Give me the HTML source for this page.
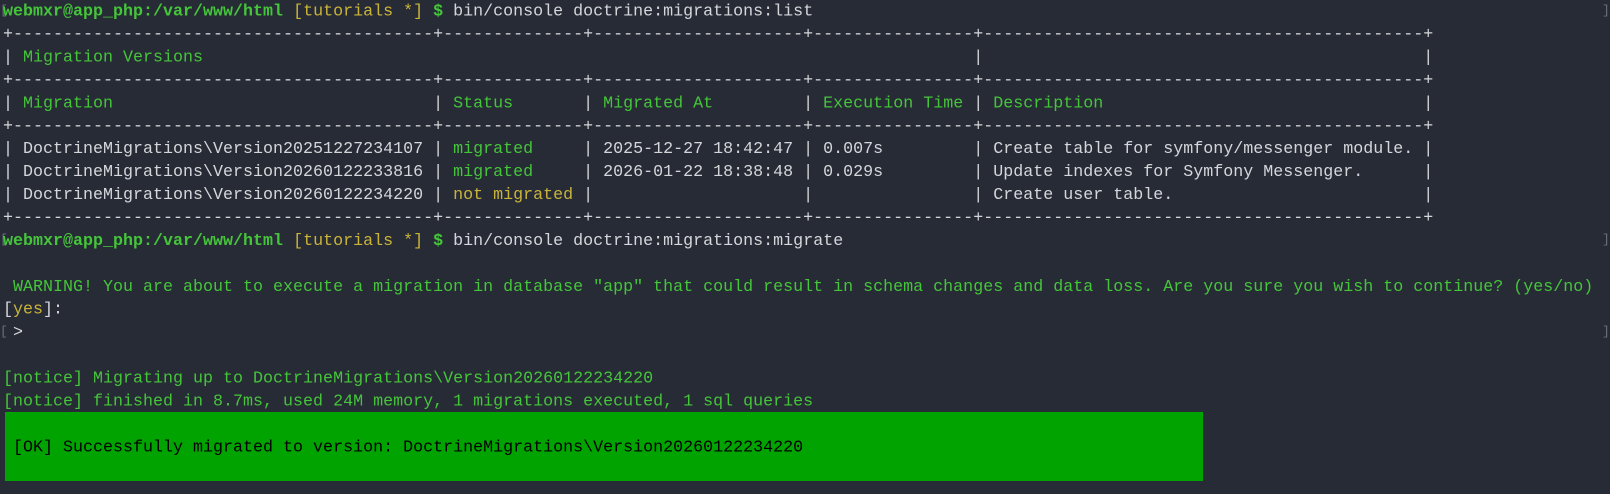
<!DOCTYPE html>
<html><head><meta charset="utf-8"><style>
html,body{margin:0;padding:0;background:#272b36;width:1610px;height:494px;overflow:hidden}
pre{position:absolute;left:3px;top:0px;margin:0;font-family:"Liberation Mono",monospace;font-size:16px;line-height:22px;color:#d4d6da;white-space:pre;transform:scale(1.0417,1.0423);transform-origin:0 0}
.g{color:#45c53a}.gb{color:#45c53a;font-weight:bold}.y{color:#c9b43a}.w{color:#d4d6da}
i{font-style:normal;display:inline-block;vertical-align:top}
.c1{width:40ch}.c2{width:12ch}.c3{width:19ch}.c4{width:14ch}.c5{width:42ch}.ct{width:94ch}.ce{width:44ch}
.box{position:absolute;left:5px;top:412px;width:1198px;height:69px;background:#00a300}
.mk{position:absolute;color:#6a6f7c;font-family:"Liberation Mono",monospace;font-size:13px}
</style></head><body>
<div class="box"></div>
<span class="mk" style="left:0;top:3px">[</span>
<span class="mk" style="left:0;top:232px">[</span>
<span class="mk" style="left:0;top:324px">[</span>
<span class="mk" style="left:1602px;top:3px">]</span>
<span class="mk" style="left:1602px;top:232px">]</span>
<span class="mk" style="left:1602px;top:324px">]</span>
<pre><span class="gb">webmxr@app_php:/var/www/html</span> <span class="y">[tutorials *]</span> <span class="gb">$</span> bin/console doctrine:migrations:list
+------------------------------------------+--------------+---------------------+----------------+--------------------------------------------+
| <i class="ct g">Migration Versions</i> |<i class="ce"></i>|
+------------------------------------------+--------------+---------------------+----------------+--------------------------------------------+
| <i class="c1 g">Migration</i> | <i class="c2 g">Status</i> | <i class="c3 g">Migrated At</i> | <i class="c4 g">Execution Time</i> | <i class="c5 g">Description</i> |
+------------------------------------------+--------------+---------------------+----------------+--------------------------------------------+
| <i class="c1">DoctrineMigrations\Version20251227234107</i> | <i class="c2 g">migrated</i> | <i class="c3">2025-12-27 18:42:47</i> | <i class="c4">0.007s</i> | <i class="c5">Create table for symfony/messenger module.</i> |
| <i class="c1">DoctrineMigrations\Version20260122233816</i> | <i class="c2 g">migrated</i> | <i class="c3">2026-01-22 18:38:48</i> | <i class="c4">0.029s</i> | <i class="c5">Update indexes for Symfony Messenger.</i> |
| <i class="c1">DoctrineMigrations\Version20260122234220</i> | <i class="c2 y">not migrated</i> | <i class="c3"></i> | <i class="c4"></i> | <i class="c5">Create user table.</i> |
+------------------------------------------+--------------+---------------------+----------------+--------------------------------------------+
<span class="gb">webmxr@app_php:/var/www/html</span> <span class="y">[tutorials *]</span> <span class="gb">$</span> bin/console doctrine:migrations:migrate

<span class="g"> WARNING! You are about to execute a migration in database "app" that could result in schema changes and data loss. Are you sure you wish to continue? (yes/no)</span>
[<span class="y">yes</span>]:
 &gt;

<span class="g">[notice] Migrating up to DoctrineMigrations\Version20260122234220</span>
<span class="g">[notice] finished in 8.7ms, used 24M memory, 1 migrations executed, 1 sql queries</span>

<span style="color:#000"> [OK] Successfully migrated to version: DoctrineMigrations\Version20260122234220</span>
</pre>
</body></html>
